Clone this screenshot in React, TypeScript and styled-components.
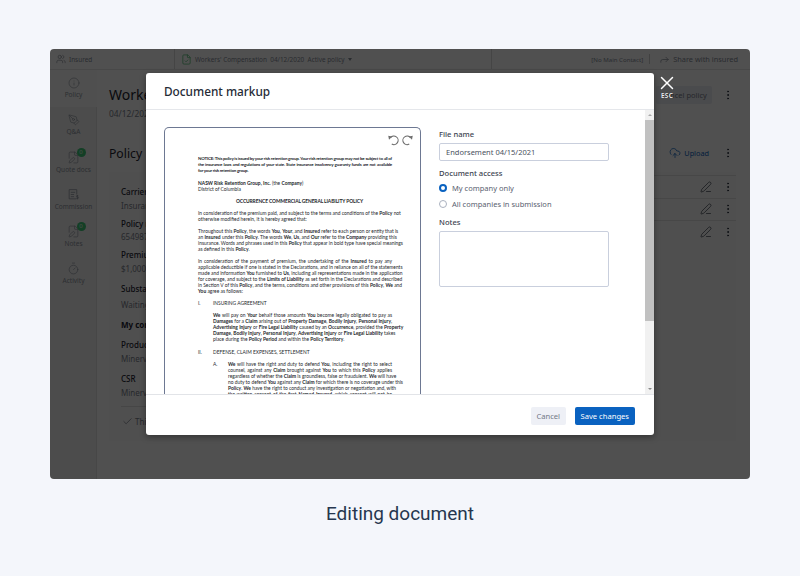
import React from "react";
import styled, { createGlobalStyle } from "styled-components";
import {
  Check,
  CloudUpload,
  EllipsisVertical,
  FileCheck,
  FilePen,
  Forward,
  Info,
  PenLine,
  PenTool,
  Timer,
  Users,
  X,
} from "lucide-react";

const Global = createGlobalStyle`
  html, body { margin: 0; padding: 0; background: #f4f6fb; }
  * { box-sizing: border-box; }
`;

const Page = styled.div`
  width: 800px;
  height: 576px;
  padding-top: 49px;
  display: flex;
  flex-direction: column;
  align-items: center;
  background: #f4f6fb;
  overflow: hidden;
`;

const Frame = styled.div`
  position: relative;
  width: 700px;
  height: 430px;
  border-radius: 4px;
  overflow: hidden;
  background: #fff;
  display: flex;
  flex-direction: column;
  font-family: "Noto Sans", "Open Sans", sans-serif;
  color: #1d2330;
`;

const Caption = styled.div`
  margin-top: 23px;
  font-family: Roboto, sans-serif;
  font-size: 19px;
  line-height: 24px;
  color: #26364f;
`;

const TopBar = styled.div`
  height: 21px;
  flex: none;
  display: flex;
  align-items: center;
  border-bottom: 1px solid #e6e6e6;
  color: #868c97;
  font-size: 6.4px;
  white-space: nowrap;
`;

const TopCell = styled.div<{ $w?: number; $end?: boolean; $line?: boolean }>`
  height: 100%;
  display: flex;
  align-items: center;
  gap: 3px;
  padding: 0 6px;
  ${(p) => (p.$w ? `width: ${p.$w}px; flex: none;` : "flex: 1;")}
  ${(p) => (p.$end ? "justify-content: flex-end; padding-right: 12px;" : "")}
  ${(p) => (p.$line ? "border-right: 1px solid #dcdcdc;" : "")}
`;

const ContactText = styled.span`
  font-size: 6.1px;
`;

const ShareText = styled.span`
  font-size: 7.4px;
`;

const Separator = styled.span`
  width: 1px;
  height: 10px;
  margin: 0 6px 0 3px;
  background: #cfcfcf;
`;

const Caret = styled.span`
  width: 0;
  height: 0;
  border-left: 2px solid transparent;
  border-right: 2px solid transparent;
  border-top: 3px solid #868c97;
`;

const Body = styled.div`
  flex: 1;
  display: flex;
  min-height: 0;
`;

const Sidebar = styled.nav`
  width: 47px;
  flex: none;
  border-right: 1px solid #e2e2e2;
  background: #f1f1f1;
  display: flex;
  flex-direction: column;
`;

const NavItem = styled.div<{ $active?: boolean }>`
  position: relative;
  height: 37px;
  display: flex;
  flex-direction: column;
  align-items: center;
  justify-content: center;
  gap: 1px;
  margin-right: -1px;
  font-size: 6.5px;
  line-height: 10px;
  color: #8f95a0;
  background: ${(p) => (p.$active ? "#fbfbfb" : "transparent")};
`;

const Badge = styled.span`
  position: absolute;
  top: 4px;
  right: 11.5px;
  width: 9px;
  height: 9px;
  border-radius: 50%;
  background: #3fc878;
  color: #e6f5ea;
  font-size: 6px;
  line-height: 9px;
  text-align: center;
`;

const Main = styled.main`
  flex: 1;
  padding: 14px 14px 0 12px;
  display: flex;
  flex-direction: column;
  min-width: 0;
`;

const SpacedRow = styled.div`
  display: flex;
  justify-content: space-between;
`;

const Title = styled.h1`
  margin: 0;
  font-size: 14px;
  line-height: 21px;
  font-weight: 400;
`;

const DateText = styled.div`
  font-size: 8.4px;
  line-height: 14px;
  margin-top: 2px;
  color: #7b818d;
`;

const Actions = styled.div`
  display: flex;
  align-items: center;
  height: 18px;
  margin-top: 2px;
`;

const CancelPolicy = styled.div`
  width: 56px;
  height: 18px;
  border-radius: 2px;
  background: #eceef4;
  color: #7b818d;
  font-size: 7.5px;
  line-height: 18px;
  text-align: center;
`;

const SectionRow = styled(SpacedRow)`
  margin-top: 22px;
  height: 20px;
  align-items: center;
`;

const SectionTitle = styled.h2`
  margin: 0;
  font-size: 12.2px;
  font-weight: 400;
`;

const UploadLink = styled.div`
  display: flex;
  align-items: center;
  gap: 3px;
  color: #0a62c0;
  font-size: 7.3px;
`;

const DotsBox = styled.span`
  width: 12px;
  margin: 0 2px 0 10px;
  display: flex;
  color: #2b3340;
`;

const Card = styled.section`
  margin-top: 9px;
  height: 269px;
  background: #fbfbfb;
  display: flex;
  justify-content: space-between;
`;

const Details = styled.div`
  width: 340px;
  padding: 13px 12px 0;
`;

const Field = styled.div<{ $gap?: number }>`
  margin-bottom: ${(p) => p.$gap ?? 4.5}px;
`;

const FieldLabel = styled.div<{ $strong?: boolean }>`
  font-size: 8px;
  line-height: 13.5px;
  font-weight: ${(p) => (p.$strong ? 700 : 500)};
`;

const FieldValue = styled.div<{ $top?: number }>`
  font-size: 8px;
  line-height: 13.5px;
  margin-top: ${(p) => p.$top ?? 0}px;
  color: #7b818d;
`;

const Notice = styled.div`
  margin-top: 7px;
  padding: 9px 0 0 1px;
  border-top: 1px solid #dfdfdf;
  display: flex;
  align-items: center;
  gap: 2px;
  font-size: 8px;
  color: #7b818d;
`;

const DocList = styled.div`
  width: 200px;
  margin-top: 3px;
`;

const DocRow = styled.div`
  height: 22.5px;
  display: flex;
  align-items: center;
  justify-content: flex-end;
  border-top: 1px solid #e2e2e2;
  color: #2b3340;
`;

const Overlay = styled.div`
  position: absolute;
  inset: 0;
  padding-top: 24px;
  display: flex;
  justify-content: center;
  align-items: flex-start;
  background: rgba(0, 0, 0, 0.686);
`;

const Modal = styled.div`
  position: relative;
  width: 508px;
  height: 362px;
  display: flex;
  flex-direction: column;
  border-radius: 3px;
  background: #fff;
  box-shadow: 0 2px 6px rgba(0, 0, 0, 0.35);
  font-family: "Noto Sans", "Open Sans", sans-serif;
`;

const CloseButton = styled.div`
  position: absolute;
  top: -1px;
  right: -24px;
  width: 22px;
  display: flex;
  flex-direction: column;
  align-items: center;
  color: #fff;
`;

const EscLabel = styled.span`
  margin-top: -2px;
  font-size: 6.4px;
  line-height: 8px;
  font-weight: 600;
  letter-spacing: 0.3px;
  color: #eef0f2;
`;

const ModalHeader = styled.header`
  height: 37px;
  flex: none;
  padding: 0 18px;
  display: flex;
  align-items: center;
  border-bottom: 1px solid #e5e7eb;
`;

const ModalTitle = styled.h2`
  margin: 0;
  font-size: 11.8px;
  font-weight: 500;
  color: #262b36;
`;

const BodyWrap = styled.div`
  position: relative;
  height: 284px;
  flex: none;
  overflow: hidden;
`;

const ModalBody = styled.div`
  height: 100%;
  overflow: hidden;
  padding: 17px 0 0 18px;
  display: flex;
  gap: 18px;
  align-items: flex-start;
`;

const ScrollTrack = styled.div`
  position: absolute;
  top: 0;
  right: 0;
  bottom: 0;
  width: 9px;
  background: #f1f1f1;
  display: flex;
  flex-direction: column;
  align-items: center;
`;

const ScrollArrow = styled.span<{ $down?: boolean }>`
  flex: none;
  width: 0;
  height: 0;
  border-left: 2px solid transparent;
  border-right: 2px solid transparent;
  ${(p) =>
    p.$down
      ? "border-top: 2px solid #8a8a8a; margin: auto 0 4px;"
      : "border-bottom: 2px solid #a9a9a9; margin: 4px 0;"}
`;

const ScrollThumb = styled.span`
  flex: none;
  width: 100%;
  height: 201px;
  background: #c1c1c1;
`;

const DocBox = styled.div`
  position: relative;
  width: 257px;
  height: 356px;
  flex: none;
  border: 1.4px solid #6d7892;
  border-bottom: 0;
  border-radius: 5px 5px 0 0;
  padding: 28px 28px 0 33px;
  overflow: hidden;
`;

const DocTools = styled.div`
  position: absolute;
  top: 6px;
  right: 6px;
  display: flex;
  gap: 3px;
`;

const ToolIcon = styled.svg<{ $flip?: boolean }>`
  width: 12px;
  height: 12px;
  color: #6f6f6f;
  ${(p) => (p.$flip ? "transform: scaleX(-1);" : "")}
`;

const DocLine = styled.div<{ $mode?: string; $indent?: number; $gap?: boolean; $tight?: boolean }>`
  font-family: Lato, "Open Sans", sans-serif;
  font-size: ${(p) => (p.$tight ? "4.5px" : "4.9px")};
  line-height: 6.02px;
  height: 6.02px;
  color: #24262b;
  white-space: nowrap;
  letter-spacing: ${(p) => (p.$tight ? "-0.24px" : "0")};
  padding-left: ${(p) => p.$indent ?? 0}px;
  margin-bottom: ${(p) => (p.$gap ? "6.02px" : "0")};
  text-align: ${(p) => (p.$mode === "justify" ? "justify" : "left")};
  text-align-last: ${(p) => (p.$mode === "justify" ? "justify" : "left")};
`;

const DocTitle = styled(DocLine)`
  font-weight: 700;
  text-align: center;
  text-align-last: center;
  padding-left: 9px;
  letter-spacing: -0.1px;
`;

const DocHeadingLine = styled(DocLine)`
  display: flex;
`;

const DocFill = styled(DocLine)`
  flex: 1;
`;

const Numeral = styled.span<{ $w: number }>`
  width: ${(p) => p.$w}px;
  flex: none;
`;

const FormColumn = styled.form`
  width: 170px;
  flex: none;
  display: flex;
  flex-direction: column;
`;

const Label = styled.div<{ $top?: number }>`
  font-size: 7.6px;
  line-height: 12px;
  font-weight: 500;
  color: #3c4350;
  margin-top: ${(p) => p.$top ?? 0}px;
`;

const TextInput = styled.div`
  height: 18px;
  margin-top: 3px;
  padding: 0 6px;
  border: 1px solid #c9cfdd;
  border-radius: 2px;
  font-size: 7.5px;
  line-height: 16px;
  color: #4a5160;
`;

const RadioRow = styled.div<{ $top: number }>`
  display: flex;
  align-items: center;
  gap: 5px;
  height: 12px;
  margin-top: ${(p) => p.$top}px;
  font-size: 7.5px;
  color: #5a6170;
`;

const Radio = styled.span<{ $on?: boolean }>`
  width: 8px;
  height: 8px;
  flex: none;
  border-radius: 50%;
  background: #fff;
  border: ${(p) => (p.$on ? "2.4px solid #0a62c0" : "1px solid #aab1bf")};
`;

const NotesBox = styled.div`
  height: 56px;
  margin-top: 3px;
  border: 1px solid #c9cfdd;
  border-radius: 2px;
`;

const ModalFooter = styled.footer`
  height: 41px;
  flex: none;
  padding: 12px 19.5px 0 0;
  display: flex;
  justify-content: flex-end;
  gap: 9.5px;
  border-top: 1px solid #e2e4e8;
`;

const Button = styled.div<{ $primary?: boolean }>`
  height: 18px;
  padding: 0 5.5px;
  border-radius: 2px;
  font-size: 7.6px;
  line-height: 18px;
  background: ${(p) => (p.$primary ? "#0a62c0" : "#eef0f6")};
  color: ${(p) => (p.$primary ? "#fff" : "#727987")};
`;

const CommissionIcon = () => (
  <svg width="13" height="13" viewBox="0 0 24 24" fill="none" stroke="currentColor" strokeWidth="1.4">
    <path d="M17 20H4V3h14v9" />
    <path d="M7 8h8M7 12h6M7 16h6" />
    <path d="M21 14.5c-.6-.8-3.6-1-3.6.7 0 1.800 3.800 1 3.800 2.900 0 1.700-3 1.600-4 .7M19.200 13v8" />
  </svg>
);

const RotateIcon = ({ flip }: { flip?: boolean }) => (
  <ToolIcon viewBox="0 0 24 24" fill="none" $flip={flip}>
    <path d="M7 7.500A8.500 8.500 0 1 1 9.500 20" stroke="currentColor" strokeWidth="2.2" />
    <path d="M2.500 3.500l8 1.500-6.500 6.500z" fill="currentColor" />
  </ToolIcon>
);

const navItems = [
  { label: "Policy", icon: <Info size={12} strokeWidth={1.2} />, active: true },
  { label: "Q&A", icon: <PenTool size={12} strokeWidth={1.2} /> },
  { label: "Quote docs", icon: <FilePen size={13} strokeWidth={1.2} />, badge: "0" },
  { label: "Commission", icon: <CommissionIcon /> },
  { label: "Notes", icon: <FilePen size={13} strokeWidth={1.2} />, badge: "0" },
  { label: "Activity", icon: <Timer size={13} strokeWidth={1.2} /> },
];

type Line = { t: string; m?: string; i?: number; g?: boolean; k?: boolean };

const J = "justify";
const noticeLines: Line[] = [
  { t: "*NOTICE: This policy is issued by your risk retention group. Your risk retention group may not be subject to all of*", m: J, k: true },
  { t: "*the insurance laws and regulations of your state. State insurance insolvency guaranty funds are not available*", m: J, k: true },
  { t: "*for your risk retention group.*", g: true, k: true },
  { t: "*NASW Risk Retention Group, Inc.* (the *Company*)" },
  { t: "District of Columbia", g: true },
];

const docLines: Line[] = [
  { t: "In consideration of the premium paid, and subject to the terms and conditions of the *Policy* not", m: J },
  { t: "otherwise modified herein, it is hereby agreed that:", g: true },
  { t: "Throughout this *Policy*, the words *You*, *Your*, and *Insured* refer to each person or entity that is", m: J },
  { t: "an *Insured* under this *Policy*. The words *We*, *Us*, and *Our* refer to the *Company* providing this", m: J },
  { t: "insurance. Words and phrases used in this *Policy* that appear in bold type have special meanings", m: J },
  { t: "as defined in this *Policy*.", g: true },
  { t: "In consideration of the payment of premium, the undertaking of the *Insured* to pay any", m: J },
  { t: "applicable deductible if one is stated in the Declarations, and in reliance on all of the statements", m: J },
  { t: "made and information *You* furnished to *Us*, including all representations made in the application", m: J },
  { t: "for coverage, and subject to the *Limits of Liability* as set forth in the Declarations and described", m: J },
  { t: "in Section V of this *Policy*, and the terms, conditions and other provisions of this *Policy*, *We* and", m: J },
  { t: "*You* agree as follows:", g: true },
];

const insuringLines: Line[] = [
  { t: "*We* will pay on *Your* behalf those amounts *You* become legally obligated to pay as", m: J, i: 15 },
  { t: "*Damages* for a *Claim* arising out of *Property Damage*, *Bodily Injury*, *Personal Injury*,", m: J, i: 15 },
  { t: "*Advertising Injury* or *Fire Legal Liability* caused by an *Occurrence*, provided the *Property*", m: J, i: 15 },
  { t: "*Damage*, *Bodily Injury*, *Personal Injury*, *Advertising Injury* or *Fire Legal Liability* takes", m: J, i: 15 },
  { t: "place during the *Policy Period* and within the *Policy Territory*.", i: 15, g: true },
];

const defenseLines: Line[] = [
  { t: "counsel, against any *Claim* brought against *You* to which this *Policy* applies", m: J, i: 30 },
  { t: "regardless of whether the *Claim* is groundless, false or fraudulent. *We* will have", m: J, i: 30 },
  { t: "no duty to defend *You* against any *Claim* for which there is no coverage under this", m: J, i: 30 },
  { t: "*Policy*. *We* have the right to conduct any investigation or negotiation and, with", m: J, i: 30 },
  { t: "the written consent of the first *Named Insured*, which consent will not be", m: J, i: 30 },
];

const rich = (text: string) =>
  text.split("*").map((part, i) => (i % 2 ? <strong key={i}>{part}</strong> : <React.Fragment key={i}>{part}</React.Fragment>));

const renderLines = (lines: Line[]) =>
  lines.map((l) => (
    <DocLine key={l.t} $mode={l.m} $indent={l.i} $gap={l.g} $tight={l.k}>
      {rich(l.t)}
    </DocLine>
  ));

const Dots = () => (
  <DotsBox>
    <EllipsisVertical size={12} strokeWidth={2} />
  </DotsBox>
);

export default function App() {
  return (
    <Page>
      <Global />
      <Frame>
        <TopBar>
          <TopCell $w={125} $line>
            <Users size={10} strokeWidth={1.5} />
            Insured
          </TopCell>
          <TopCell $w={317} $line>
            <FileCheck size={11} strokeWidth={1.8} color="#5fc47f" />
            Workers' Compensation &nbsp;04/12/2020 &nbsp;Active policy
            <Caret />
          </TopCell>
          <TopCell $end>
            <ContactText>[No Main Contact]</ContactText>
            <Separator />
            <Forward size={11} strokeWidth={1.6} />
            <ShareText>Share with insured</ShareText>
          </TopCell>
        </TopBar>
        <Body>
          <Sidebar>
            {navItems.map((n) => (
              <NavItem key={n.label} $active={n.active}>
                {n.icon}
                {n.label}
                {n.badge && <Badge>{n.badge}</Badge>}
              </NavItem>
            ))}
          </Sidebar>
          <Main>
            <SpacedRow>
              <div>
                <Title>Workers' Compensation</Title>
                <DateText>04/12/2020</DateText>
              </div>
              <Actions>
                <CancelPolicy>Cancel policy</CancelPolicy>
                <Dots />
              </Actions>
            </SpacedRow>
            <SectionRow>
              <SectionTitle>Policy</SectionTitle>
              <UploadLink>
                <CloudUpload size={12} strokeWidth={1.5} />
                Upload
                <Dots />
              </UploadLink>
            </SectionRow>
            <Card>
              <Details>
                <Field>
                  <FieldLabel>Carrier</FieldLabel>
                  <FieldValue>Insurance Company</FieldValue>
                </Field>
                <Field>
                  <FieldLabel>Policy number</FieldLabel>
                  <FieldValue>654987321</FieldValue>
                </Field>
                <Field $gap={7}>
                  <FieldLabel>Premium</FieldLabel>
                  <FieldValue>$1,000,000</FieldValue>
                </Field>
                <Field $gap={6.5}>
                  <FieldLabel>Substatus</FieldLabel>
                  <FieldValue $top={2.5}>Waiting for documents</FieldValue>
                </Field>
                <Field $gap={6.5}>
                  <FieldLabel $strong>My company</FieldLabel>
                </Field>
                <Field $gap={7}>
                  <FieldLabel>Producer</FieldLabel>
                  <FieldValue>Minerva Mutual</FieldValue>
                </Field>
                <Field>
                  <FieldLabel>CSR</FieldLabel>
                  <FieldValue>Minerva Mutual</FieldValue>
                </Field>
                <Notice>
                  <Check size={11} strokeWidth={1.6} />
                  This policy is active
                </Notice>
              </Details>
              <DocList>
                {[0, 1, 2].map((i) => (
                  <DocRow key={i}>
                    <PenLine size={12} strokeWidth={1.3} />
                    <Dots />
                  </DocRow>
                ))}
              </DocList>
            </Card>
          </Main>
        </Body>
        <Overlay>
          <Modal>
            <CloseButton>
              <X size={22} strokeWidth={1.6} />
              <EscLabel>ESC</EscLabel>
            </CloseButton>
            <ModalHeader>
              <ModalTitle>Document markup</ModalTitle>
            </ModalHeader>
            <BodyWrap>
              <ModalBody>
                <DocBox>
                  <DocTools>
                    <RotateIcon />
                    <RotateIcon flip />
                  </DocTools>
                  {renderLines(noticeLines)}
                  <DocTitle $gap>OCCURRENCE COMMERCIAL GENERAL LIABILITY POLICY</DocTitle>
                  {renderLines(docLines)}
                  <DocHeadingLine $gap>
                    <Numeral $w={15}>I.</Numeral>
                    INSURING AGREEMENT
                  </DocHeadingLine>
                  {renderLines(insuringLines)}
                  <DocHeadingLine $gap>
                    <Numeral $w={15}>II.</Numeral>
                    DEFENSE, CLAIM EXPENSES, SETTLEMENT
                  </DocHeadingLine>
                  <DocHeadingLine>
                    <Numeral $w={15} />
                    <Numeral $w={15}>A.</Numeral>
                    <DocFill $mode={J}>
                      {rich("*We* will have the right and duty to defend *You*, including the right to select")}
                    </DocFill>
                  </DocHeadingLine>
                  {renderLines(defenseLines)}
                </DocBox>
                <FormColumn>
                  <Label $top={1}>File name</Label>
                  <TextInput>Endorsement 04/15/2021</TextInput>
                  <Label $top={6}>Document access</Label>
                  <RadioRow $top={2.5}>
                    <Radio $on />
                    My company only
                  </RadioRow>
                  <RadioRow $top={4}>
                    <Radio />
                    All companies in submission
                  </RadioRow>
                  <Label $top={6.5}>Notes</Label>
                  <NotesBox />
                </FormColumn>
              </ModalBody>
              <ScrollTrack>
                <ScrollArrow />
                <ScrollThumb />
                <ScrollArrow $down />
              </ScrollTrack>
            </BodyWrap>
            <ModalFooter>
              <Button>Cancel</Button>
              <Button $primary>Save changes</Button>
            </ModalFooter>
          </Modal>
        </Overlay>
      </Frame>
      <Caption>Editing document</Caption>
    </Page>
  );
}
